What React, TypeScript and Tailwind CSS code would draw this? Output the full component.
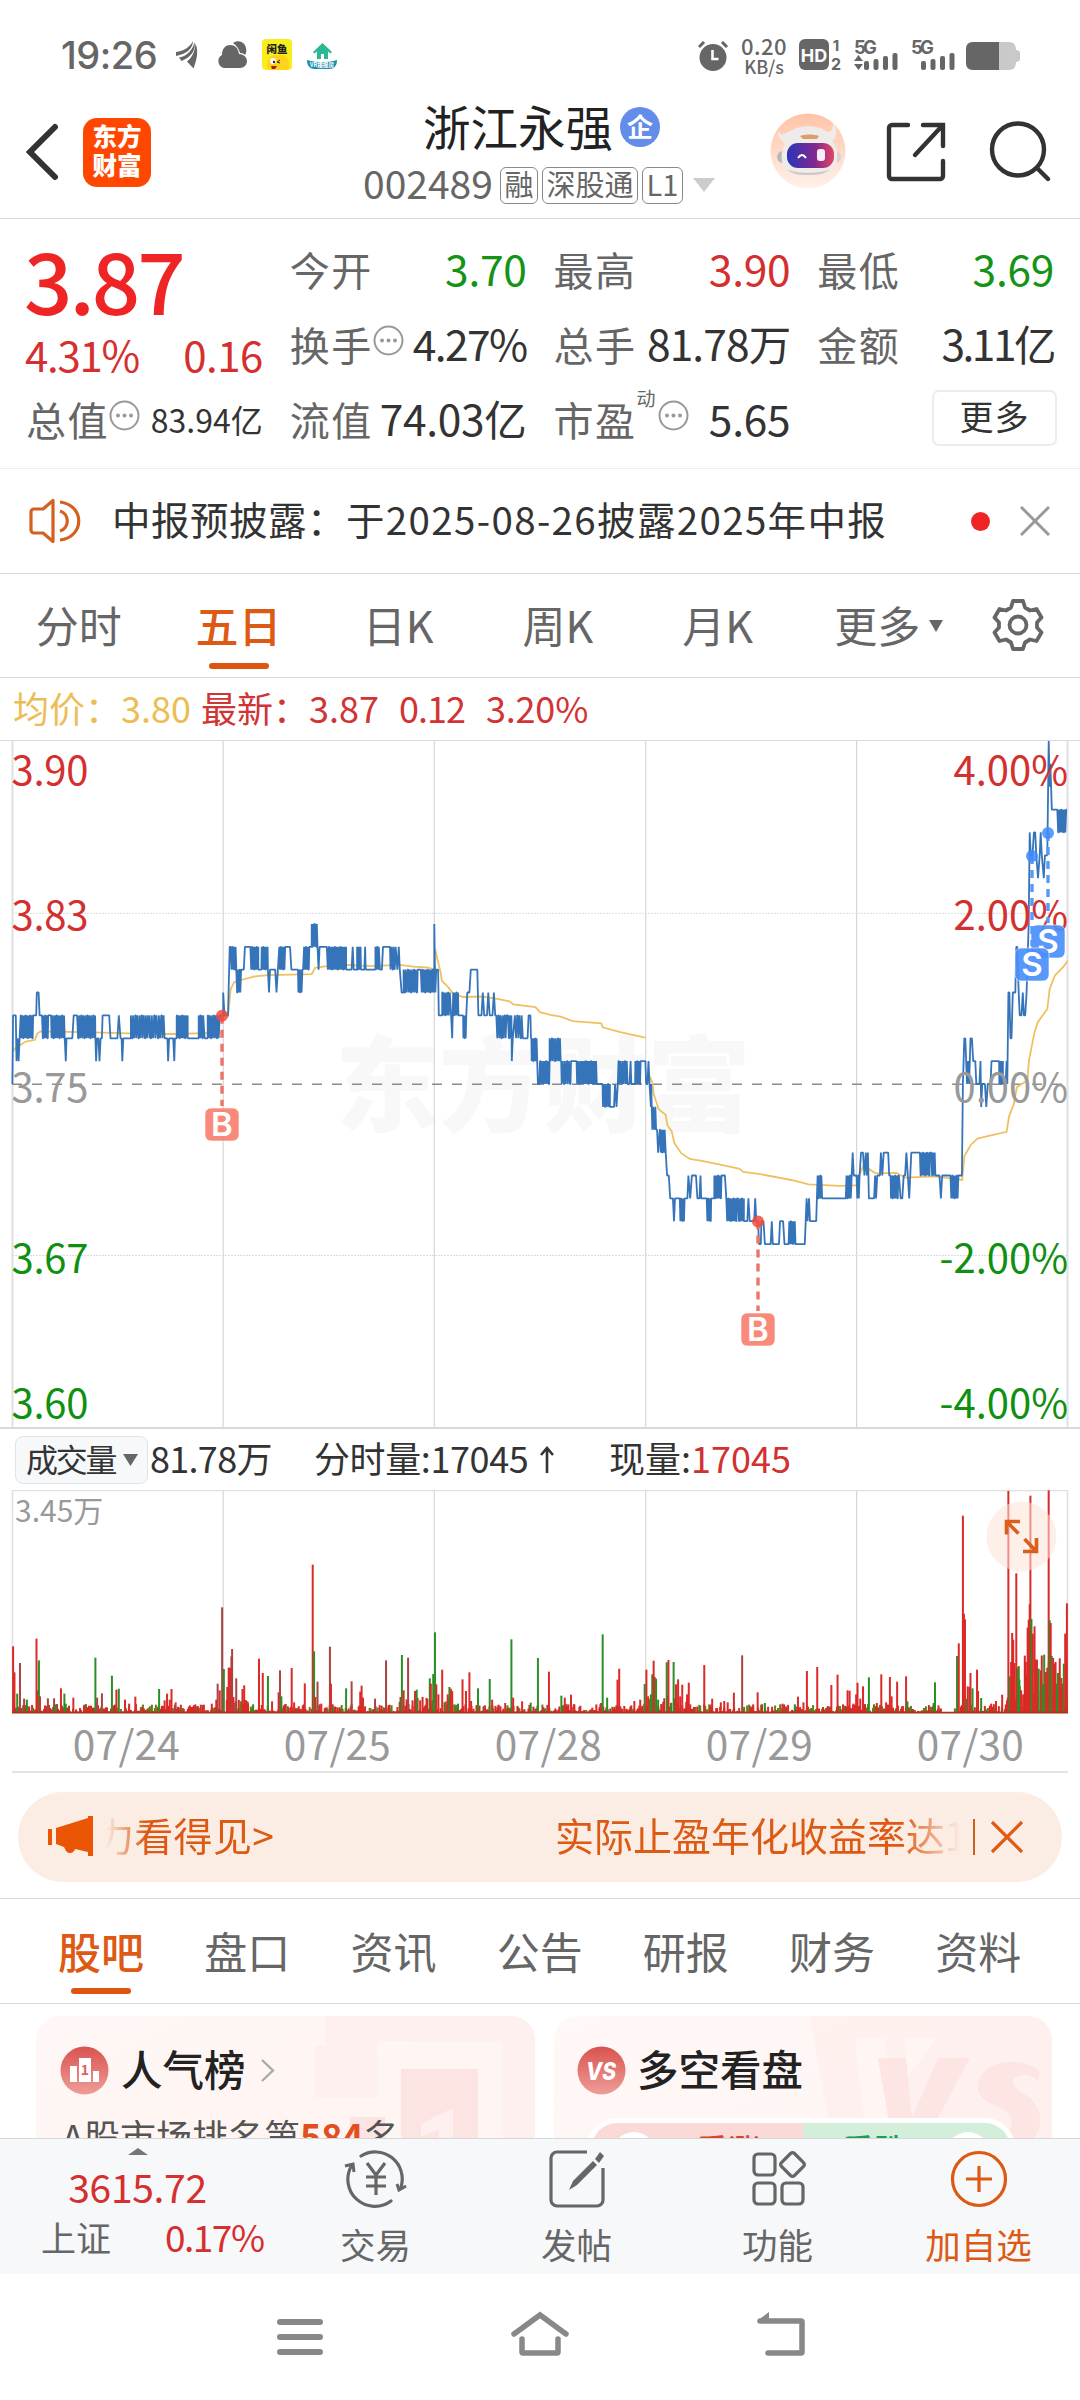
import type { ReactNode } from "react";

// Samples are stored in a 1568-unit-wide half-chart space, second half offset by 1568
const UNIT = 540 / 1568;
const HALF = 1568;
const TICK = 22.87; // height of one cent

// [x, level] is a point; [x0, x1, low, high, n] is a run of n swings between two levels
const LEFT: number[][] = [
  [36, 0], [38, 3], [46, 3], [48, 1], [51, 2], [54, 1], [57, 2], [60, 96, 2, 3, 16], [96, 3], [105, 3], [107, 4], [112, 4], [115, 3], [122, 3],
  [122, 140, 2, 3, 7], [141, 3], [147, 3], [147, 186, 2, 3, 13], [188, 2], [191, 1], [193, 2], [210, 2], [214, 3], [224, 3],
  [224, 276, 2, 3, 18], [277, 2], [279, 1], [282, 2], [286, 2], [289, 1], [292, 2], [296, 2], [298, 3], [317, 3], [321, 2], [341, 2],
  [345, 3], [350, 2], [353, 2], [355, 1], [358, 2], [380, 2], [380, 430, 2, 3, 16], [430, 3], [434, 2], [434, 475, 2, 3, 12], [478, 2],
  [486, 2], [488, 1], [491, 2], [503, 2], [506, 1], [508, 2], [513, 2], [513, 545, 2, 3, 12], [545, 2], [577, 2], [577, 590, 2, 3, 6],
  [590, 3], [594, 2], [603, 2], [603, 638, 2, 3, 11], [639, 3], [648, 3],
  [648, 4], [652, 3], [662, 3], [667, 6], [670, 684, 5, 6, 5], [686, 700, 4, 5, 6], [703, 5], [708, 5], [711, 6], [727, 6],
  [727, 750, 5, 6, 9], [750, 5], [759, 5], [760, 777, 5, 6, 7], [778, 5], [781, 4], [784, 5], [799, 5], [803, 4], [807, 5],
  [811, 828, 5, 6, 7], [828, 6], [842, 6], [846, 5], [863, 5], [864, 878, 4, 5, 6], [880, 5], [883, 898, 5, 6, 6], [898, 6], [905, 6],
  [905, 920, 6, 7, 7], [922, 6], [925, 5], [928, 6], [948, 6], [949, 1005, 5, 6, 20], [1005, 5], [1021, 5], [1024, 6], [1027, 5],
  [1037, 5], [1037, 1047, 5, 6, 4], [1048, 5], [1058, 5], [1060, 6], [1062, 5], [1090, 5], [1090, 1100, 5, 6, 4], [1103, 5], [1109, 5], [1112, 6],
  [1130, 6], [1131, 1149, 5, 6, 6], [1154, 5], [1158, 6], [1161, 5], [1166, 4], [1172, 4], [1172, 1213, 4, 5, 14], [1217, 5], [1222, 1261, 4, 5, 15],
  [1261, 7], [1264, 4], [1267, 5], [1272, 5], [1274, 3], [1284, 3], [1284, 1306, 3, 4, 8], [1310, 3], [1313, 2], [1316, 1330, 3, 4, 6],
  [1331, 3], [1344, 3], [1344, 1354, 2, 3, 5], [1357, 4], [1363, 4], [1367, 5], [1386, 5], [1389, 3], [1398, 3], [1402, 4], [1406, 3],
  [1414, 3], [1418, 4], [1422, 3], [1430, 3], [1434, 4], [1438, 3], [1441, 1471, 2, 3, 10], [1475, 1485, 2, 3, 4], [1486, 1], [1489, 2],
  [1495, 1515, 2, 3, 5], [1518, 2], [1532, 2], [1535, 3], [1540, 3], [1542, 1558, 1, 2, 7], [1560, 1], [1562, 0], [1566, 0], [1568, 1],
];

const RIGHT: number[][] = [
  [0, 28, 0, 1, 9], [28, 58, 1, 2, 10], [60, 90, 0, 1, 10], [90, 1], [103, 1], [105, 122, 0, 1, 6], [122, 163, 0, 1, 15], [165, 0], [178, 0],
  [180, 203, -1, 0, 8], [203, -1], [215, -1], [218, 0], [222, -1], [226, 0], [228, 252, 0, 1, 8], [254, 0], [260, 0], [263, 1], [265, 0],
  [276, 0], [277, 292, 0, 1, 5], [292, 1], [306, 1], [308, 0],
  [312, 0], [315, 1], [318, 0], [322, -1], [323, 0], [326, -2], [329, -1], [332, -2], [335, -1], [337, -2], [340, -2], [343, -3], [348, 362, -3, -2, 6], [365, -3],
  [369, -4], [374, -4], [378, -5], [386, -5], [389, -6], [392, -5], [404, -5], [406, 420, -6, -5, 7], [422, -5], [428, -5], [431, -4],
  [436, -5], [441, -4], [453, -4], [457, -5], [463, -5], [466, -4], [468, -5], [484, -5], [484, 497, -6, -5, 6], [497, -5], [506, -5],
  [506, 527, -5, -4, 8], [530, -4], [537, -4], [541, 572, -6, -5, 12], [575, 592, -6, -5, 6], [592, -6], [602, -6], [605, -5], [609, -6],
  [622, -6], [625, -5], [628, -6], [633, -6], [636, -7], [641, -7], [643, -6], [649, -6], [653, -7], [670, -7], [673, -6], [676, -7],
  [694, -7], [697, -6], [706, -6], [710, -7], [722, -7], [724, 740, -7, -6, 8], [742, -7], [769, -7], [774, -5], [777, -6], [781, -5],
  [784, -6], [802, -6], [806, -4], [806, 817, -5, -4, 5], [819, -5], [888, -5], [890, 905, -5, -4, 5], [908, -3], [911, -4], [915, -4],
  [919, 928, -5, -4, 4], [932, -3], [938, -3], [942, -4], [946, -3], [949, -4], [952, -3], [955, -5], [970, -5], [973, -4], [976, -5],
  [979, -4], [987, -4], [990, -3], [994, -4], [998, -3], [1011, -3], [1014, -4], [1017, 1040, -5, -4, 10], [1042, -4], [1047, -5],
  [1052, -5], [1056, -4], [1060, -4], [1064, -3], [1068, -4], [1072, -5], [1078, -3], [1101, -3], [1103, 1132, -4, -3, 13],
  [1136, 1146, -4, -3, 4], [1148, -4], [1160, -4], [1164, -5], [1168, -4], [1190, -4], [1192, 1215, -5, -4, 10], [1217, -4], [1225, -4],
  [1228, 0], [1232, 2], [1235, 2], [1240, 0], [1243, 1], [1246, 0], [1250, 2], [1254, 2], [1258, 1], [1264, 1], [1267, 0], [1276, 0], [1279, 1],
  [1281, -1], [1284, 0], [1292, 0], [1296, -1], [1300, 0], [1308, 0], [1311, 1], [1330, 1], [1332, 1344, 0, 1, 6], [1344, 0], [1352, 0],
  [1355, 1], [1357, 0], [1360, 4], [1363, 4], [1366, 2], [1369, 2], [1373, 4], [1380, 4], [1383, 6], [1386, 6], [1390, 4], [1393, 3],
  [1398, 3], [1402, 4], [1405, 3], [1409, 3], [1413, 4], [1419, 7], [1422, 11], [1425, 10], [1430, 10], [1434, 11], [1438, 11], [1441, 10],
  [1446, 9], [1451, 10], [1454, 11], [1457, 10], [1463, 9], [1466, 10], [1473, 10], [1477, 15], [1480, 13], [1482, 14], [1486, 12],
  [1502, 12], [1502, 1528, 11, 12, 10], [1530, 12],
];

const AVERAGES = [
  "38,720 45,712 60,705 75,698 102,694 108,680 118,675 200,676 300,678 400,680 500,681 600,679 640,678",
  "648,625 662,640 670,580 680,565 700,560 740,552 780,549 905,547 915,533 960,528 1010,526 1080,529 1160,526 1200,530 1240,532 1261,536",
  "1263,490 1272,520 1280,545 1283,562 1300,575 1315,590 1345,598 1400,597 1440,602 1480,608 1490,615 1555,621 1568,632 1598,638 1628,642 1663,652 1746,657 1750,666 1798,676 1874,689",
  "1876,778 1886,775 1894,790 1898,815 1913,850 1933,862 1938,885 1951,900 1958,925 1978,948 2003,961 2038,965 2098,975 2148,983 2158,990 2208,995 2298,1008 2348,1018 2438,1021 2486,1020",
  "2488,1010 2508,975 2526,985 2543,993 2603,992 2628,1003 2715,1000 2794,1008 2800,955 2818,930 2838,915 2868,910 2923,900 2930,865 2943,840 2953,800 2983,785 2988,740 3003,680 3013,655 3041,625 3048,580 3063,550 3088,530 3100,517",
];

// x,top and a colour flag: g = falling minute, d = shaded
const VOL_LEFT =
  "38,678 42,756 58,728d 50,820g 70,835d 78,838g 106,655 109,810 113,720g 116,828 139,834d 157,834d 162,852g 177,804 187,820g 191,850g 213,832 245,853 277,712g 282,832d 296,819d 325,766g 338,808 345,805g 363,838 375,850 393,829 412,860 462,806g 478,840 485,820 493,838 498,806 510,846d 550,860 567,852 590,854 615,850 628,838 632,790d 638,810 645,561d 650,746g 660,800 664,742 668,742 672,708 674,686d 678,830 686,774d 704,806 709,795 714,840 720,850 735,852g 752,715 763,758 778,767g 790,843 809,816 813,750d 817,828g 847,743 854,846 880,855 885,789 908,433 912,693g 916,830 922,784d 933,850 945,862 958,679d 961,790 966,862g 1005,804g 1021,783d 1046,814 1050,796 1054,832 1060,858 1089,835d 1121,720d 1154,860 1163,830 1167,704g 1172,810 1177,856 1185,712d 1198,840 1205,812 1210,808g 1220,840 1233,858 1241,836 1248,774g 1251,790 1258,761g 1263,636g 1267,792 1273,822 1284,748 1300,822 1305,800g 1309,805 1313,812 1330,850g 1343,777 1353,812 1363,756 1368,842 1388,804g 1408,855 1422,776g 1429,838 1448,855 1467,848 1485,657g 1490,832 1516,843 1541,847g 1562,713g";
const VOL_RIGHT =
  "26,754 62,826g 72,832 90,823 98,852 152,862 177,848 182,642g 195,832g 225,778 230,745 238,865 274,842 291,838 304,791g 309,748 314,828 322,822g 326,762g 330,721 333,770 337,775g 343,838g 358,858 368,726g 373,719 380,850g 388,725g 395,792 401,777 407,828 413,793 427,822 432,787 447,860 477,734 500,835 525,846 535,842 545,846 563,817 587,705d 619,852 632,816 653,848g 704,850 740,852g 749,829 765,846 775,752 805,740 835,858 846,794 864,763 893,810 899,811 910,850 918,822 922,787 930,835 938,798 955,771g 978,848 991,762 1005,846 1016,770 1021,828 1037,784 1051,860 1063,768 1067,843g 1143,848g 1147,786g 1157,855 1211,707g 1216,669 1228,286 1231,580 1234,597 1238,835g 1242,798 1247,800 1250,758 1256,804g 1269,748 1272,812 1281,833g 1310,850 1324,842 1342,823 1356,840 1360,212 1364,768g 1368,725 1371,638 1374,658 1378,728 1383,459 1388,741g 1392,778g 1397,810 1403,822 1411,786 1416,622 1419,598 1422,552 1424,226 1427,596g 1431,640 1436,618 1440,718 1443,718 1448,745g 1454,750 1459,792g 1464,703g 1469,755 1473,742 1477,210 1480,600g 1483,608 1486,707g 1490,713 1494,730 1497,725 1501,790g 1504,758g 1508,790 1511,800 1514,773 1518,790 1521,730g 1525,640 1530,549";

function pricePath() {
  const out: string[] = [];
  const push = (x: number, v: number) => out.push(`${(x * UNIT).toFixed(1)},${(343 - v * TICK).toFixed(1)}`);
  const run = (list: number[][], off: number) => {
    for (const s of list) {
      if (s.length === 2) {
        push(s[0] + off, s[1]);
        continue;
      }
      const [a, b, lo, hi] = s;
      const n = Math.max(2, Math.round(s[4] * 0.52));
      const step = (b - a) / (n * 2);
      // uneven swings, some hold their level for a moment
      for (let i = 0; i <= n * 2; i++) {
        const hold = (i * 7 + a) % 3 === 0 ? step * 0.5 : 0;
        push(a + off + i * step, i % 2 ? lo : hi);
        if (hold && i < n * 2) push(a + off + i * step + hold, i % 2 ? lo : hi);
      }
    }
  };
  run(LEFT, 0);
  run(RIGHT, HALF);
  return out.join(" ");
}

function avgPath(src: string) {
  return src
    .split(" ")
    .map((p) => {
      const [x, y] = p.split(",").map(Number);
      return `${(x * UNIT).toFixed(1)},${((y - 793) * 0.4464 + 343).toFixed(1)}`;
    })
    .join(" ");
}

type Bar = { x: number; h: number; c: string };

function volumeBars(): Bar[] {
  const bars: Bar[] = [];
  let seed = 7;
  const rnd = () => {
    seed = (seed * 16807) % 2147483647;
    return seed / 2147483647;
  };
  for (let x = 38; x < 3100; x += 2.9) {
    const r = rnd();
    const busy = x > 2925 ? 60 : (x > 650 && x < 730) || (x > 1160 && x < 1320) || (x > 1870 && x < 2000) ? 16 : 8;
    const quiet = x > 2735 && x < 2770;
    bars.push({ x: x * UNIT, h: quiet ? 1 : 1 + r * r * busy, c: rnd() > 0.72 ? "#5f7d18" : "#d32a26" });
  }
  const add = (src: string, off: number) => {
    for (const p of src.split(" ")) {
      const [x, y] = p.split(",");
      const c = y.endsWith("g") ? "#2a8f25" : y.endsWith("d") ? "#a84444" : "#db2a28";
      bars.push({ x: (Number(x) + off) * UNIT, h: Math.min(223, (878 - parseInt(y)) / 3), c });
    }
  };
  add(VOL_LEFT, 0);
  add(VOL_RIGHT, HALF);
  return bars;
}

const GRID_X = [223.2, 434.3, 645.7, 856.6];

const AXIS = [
  { y: 43.5, price: "3.90", pct: "4.00%", fill: "#d33030" },
  { y: 188.5, price: "3.83", pct: "2.00%", fill: "#d33030" },
  { y: 360.5, price: "3.75", pct: "0.00%", fill: "#999999" },
  { y: 531.5, price: "3.67", pct: "-2.00%", fill: "#0f9010" },
  { y: 676.5, price: "3.60", pct: "-4.00%", fill: "#0f9010" },
];

const MARKS = [
  { x: 222, dot: 274.7, box: 367, t: "B" },
  { x: 758, dot: 480.5, box: 572, t: "B" },
  { x: 1048, dot: 92, box: 184, t: "S" },
  { x: 1032, dot: 115, box: 207, t: "S" },
];

function PriceChart() {
  return (
    <svg width="1080" height="686" viewBox="0 0 1080 686" className="block">
      <text x="543" y="383" textAnchor="middle" fontSize="104" fontWeight="900" fill="#f8f8f8">东方财富</text>
      {GRID_X.map((x) => (
        <line key={x} x1={x} x2={x} y1="0" y2="686" stroke="#d6d6d6" strokeWidth="1.2" />
      ))}
      <path d="M12.5 0V686M1067.5 0V686" stroke="#e0e0e0" strokeWidth="2" />
      <path d="M12 172.3H1068M12 514.5H1068" stroke="#dcdcdc" strokeWidth="1" strokeDasharray="2 1" />
      <path d="M12 343.3H1068" stroke="#8c8c8c" strokeWidth="1.6" strokeDasharray="10 10" />
      {AVERAGES.map((a) => (
        <polyline key={a.slice(0, 8)} points={avgPath(a)} fill="none" stroke="#efc062" strokeWidth="1.8" />
      ))}
      <polyline points={pricePath()} fill="none" stroke="#3674ba" strokeWidth="1.8" strokeLinejoin="bevel" />
      {AXIS.map((a) => (
        <g key={a.price} fill={a.fill} fontSize="40">
          <text x="11.5" y={a.y} textLength="77">{a.price}</text>
          <text x="1068" y={a.y} textAnchor="end">{a.pct}</text>
        </g>
      ))}
      {MARKS.map((m) => {
        const buy = m.t === "B";
        return (
          <g key={m.x}>
            <line x1={m.x} x2={m.x} y1={m.dot} y2={m.box - 2} stroke={buy ? "#ec7468" : "#5a98f5"} strokeWidth="3.4" strokeDasharray="8 6" />
            <circle cx={m.x} cy={m.dot} r="6" fill={buy ? "#f04a3e" : "#3f8bfa"} opacity="0.85" />
            <rect x={m.x - 17} y={m.box} width="34" height="33" rx="6" fill={buy ? "#f97f6f" : "#4a90fa"} stroke="#fff" strokeOpacity="0.6" strokeWidth="1" opacity="0.92" />
            <text x={m.x} y={m.box + 28} textAnchor="middle" fontSize="33" fontWeight="600" fill="#fff" fontFamily="Inter">{m.t}</text>
          </g>
        );
      })}
    </svg>
  );
}

function VolumeChart() {
  return (
    <svg width="1080" height="224" viewBox="0 0 1080 224" className="block">
      {GRID_X.map((x) => (
        <line key={x} x1={x} x2={x} y1="0" y2="223" stroke="#d6d6d6" strokeWidth="1.2" />
      ))}
      <path d="M12.5 0V223M1067.5 0V223M12 .5H1068" stroke="#e0e0e0" strokeWidth="1.6" fill="none" />
      {volumeBars().map((b, i) => (
        <rect key={i} x={b.x - 1} y={223 - b.h} width="2" height={b.h} fill={b.c} />
      ))}
      <path d="M12 222.6H1068" stroke="#a83218" strokeWidth="1.6" />
      <circle cx="1021.5" cy="46.5" r="35" fill="#fde3d6" opacity="0.55" />
      <g stroke="#d8601c" strokeWidth="3.6" fill="none">
        <path d="M1006.500 44.500V31.500H1020M1007 32l11.500 11.500" />
        <path d="M1036.500 48V61.500H1023M1036 61l-11.500-12" />
      </g>
      <text x="15" y="32" fontSize="30" fill="#999">3.45万</text>
    </svg>
  );
}

function StatusBar() {
  return (
    <div className="flex h-[108px] items-start pt-[34px] pr-[60px] pl-[61px] text-[#666]">
      <span className="w-[98px] font-[Inter] text-[38px] leading-[42px] font-medium tracking-[-0.5px]">19:26</span>
      <svg width="24" height="30" viewBox="0 0 24 30" className="mt-[6px] ml-[17px]" fill="#666">
        <path d="M0 12C8 11 14 7 17 1c0 7-6 13-17 15zM3 17.500C12 16 17 9 18.500 2c1.500 8-3 15-13 19zM11 21.500c5-4 8-10 8.500-18 3.500 8 1 17-2 25z" />
      </svg>
      <svg width="30" height="29" viewBox="0 0 30 29" className="mt-[6px] ml-[17px]" fill="#666">
        <path d="M16 3c7-5 15 1 13 10l-1 2c-2-2-4-2-5-2-1-4-3-7-7-10z" />
        <path d="M7 28a7 7 0 0 1-2-13C5 8 9 5 13 5c5 0 8 3 9 9 4 0 8 3 8 7s-3 7-7 7z" />
      </svg>
      <svg width="31" height="32" viewBox="0 0 31 32" className="mt-[5px] ml-[15px]">
        <rect width="30" height="31" rx="4" fill="#f7ee1c" />
        <text x="15" y="13.500" fontSize="10.500" fontWeight="900" textAnchor="middle" fill="#222">闲鱼</text>
        <path d="M5 28c-1-7 3-12 9-12h8c4 2 6 7 5 13l-2 2H8z" fill="#ffd31a" />
        <circle cx="11" cy="22" r="3" fill="#fff" />
        <circle cx="12" cy="23" r="1.200" fill="#222" />
        <path d="M18 21l-3 2 3 1" stroke="#222" fill="none" />
        <path d="M9 27h6l-2 3h-3z" fill="#a3201a" />
      </svg>
      <svg width="31" height="30" viewBox="0 0 31 30" className="mt-[8px] ml-[14px]">
        <path d="M15.500 1L6 10l1.500 1.500L10 9.500V17h4v-5h3v5h4V9.500l2.500 2L25 10z" fill="#2cb893" />
        <path d="M0 18c10 3 20 3 30 0 0 6-3 9-8 9H8c-5 0-8-3-8-9z" fill="#1b8fae" />
        <text x="15" y="25" fontSize="6" fontWeight="700" textAnchor="middle" fill="#fff" textLength="24" lengthAdjust="spacingAndGlyphs">VR播报房</text>
      </svg>

      <svg width="30" height="30" viewBox="0 0 30 30" className="mt-[7px] ml-auto" fill="#666">
        <circle cx="15" cy="16.500" r="13.500" />
        <path d="M1 6l5-5M24 1l5 5" stroke="#666" strokeWidth="3" />
        <path d="M14.500 9v9h6" stroke="#fff" strokeWidth="2.600" fill="none" />
      </svg>
      <div className="ml-[11px] flex w-[50px] flex-col items-center font-medium">
        <span className="text-[22px] leading-[23px] tracking-[0.500px]">0.20</span>
        <span className="text-[18px] leading-[18px]">KB/s</span>
      </div>
      <svg width="44" height="32" viewBox="0 0 44 32" className="mt-[5px] ml-[10px]">
        <rect width="30" height="31" rx="6" fill="#666" />
        <text x="15" y="22.500" fontSize="18" fontWeight="700" textAnchor="middle" fill="#fff" fontFamily="Inter">HD</text>
        <text x="37" y="12" fontSize="15" fontWeight="700" textAnchor="middle" fill="#666" fontFamily="Inter">1</text>
        <text x="37" y="30.500" fontSize="16" fontWeight="700" textAnchor="middle" fill="#666" fontFamily="Inter">2</text>
      </svg>
      <Signal arrows />
      <Signal />
      <svg width="54" height="28" viewBox="0 0 54 28" className="mt-[8px] ml-[9px]">
        <path d="M33 0h10c5 0 7 3 7 8 2 0 4 1 4 3v6c0 2-2 3-4 3 0 5-2 8-7 8H33z" fill="#c9c9c9" />
        <path d="M7 0h26v28H7c-5 0-7-3-7-7V7c0-4 2-7 7-7z" fill="#666" />
      </svg>
    </div>
  );
}

function Signal({ arrows }: { arrows?: boolean }) {
  return (
    <svg width="46" height="32" viewBox="0 0 46 32" className="mt-[5px] ml-[11px]" fill="#666">
      <text x="0" y="14.500" fontSize="18.500" fontWeight="700" fontFamily="Inter" textLength="23">5G</text>
      {arrows && <path d="M0 22l4.500-6 4.500 6zM0 25h9l-4.500 6z" />}
      <rect x="10" y="22" width="5" height="9" rx="2" />
      <rect x="19.500" y="20" width="5" height="11" rx="2" />
      <rect x="29" y="17" width="5" height="14" rx="2" />
      <rect x="38.500" y="14" width="5" height="17" rx="2" />
    </svg>
  );
}

function Tag({ children }: { children: ReactNode }) {
  return (
    <span className="flex h-[37px] shrink-0 items-center rounded-[6px] border border-[#8a8a8a] px-[3.500px] pb-[3px] text-[29px] leading-none whitespace-nowrap">
      {children}
    </span>
  );
}

function Header() {
  return (
    <header className="flex h-[111px] items-start border-b border-[#d9d9d9] pl-[26px]">
      <svg width="34" height="58" viewBox="0 0 34 58" className="mt-[15px]">
        <path d="M29 4L4 29l25 25" fill="none" stroke="#333" strokeWidth="6" strokeLinecap="round" />
      </svg>
      <div className="mt-[10px] ml-[23px] flex h-[69px] w-[68px] flex-col items-center justify-center rounded-[14px] bg-[#ff4700] text-[24.500px] leading-[29px] font-black text-white">
        <span className="-mt-[5px]">东方</span>
        <span>财富</span>
      </div>
      <div className="ml-[212px] flex w-[354px] flex-col">
        <div className="flex h-[54px] items-start pl-[60px]">
          <span className="-mt-[6px] text-[47.500px] leading-[47px] text-[#222]">浙江永强</span>
          <span className="-mt-px ml-[7px] flex h-[40px] w-[40px] items-center justify-center rounded-full bg-[#638de8] pb-[3px] text-[26px] leading-none font-bold text-white">
            企
          </span>
        </div>
        <div className="flex items-center text-[#666]">
          <span className="-mt-[2px] w-[137px] shrink-0 text-[39px] leading-[44px]">002489</span>
          <div className="mt-[4px] flex shrink-0 items-center gap-[4px]">
            <Tag>融</Tag>
            <Tag>深股通</Tag>
            <Tag>L1</Tag>
          </div>
          <svg width="22" height="14" viewBox="0 0 22 14" className="mt-[4px] ml-[10px] shrink-0">
            <path d="M0 0h22L11 14z" fill="#ccc" />
          </svg>
        </div>
      </div>
      <svg width="76" height="78" viewBox="0 0 76 78" className="mt-[4px] ml-[53px]">
        <defs>
          <linearGradient id="halo" x1="0" y1="0" x2="0" y2="1">
            <stop offset="0" stopColor="#ffc3a6" />
            <stop offset="1" stopColor="#fff1ea" />
          </linearGradient>
          <linearGradient id="visor" x1="0" y1="0" x2="1" y2="0">
            <stop offset="0" stopColor="#2a35b8" />
            <stop offset="0.6" stopColor="#83288f" />
            <stop offset="1" stopColor="#e04663" />
          </linearGradient>
        </defs>
        <circle cx="38" cy="39" r="37.500" fill="url(#halo)" />
        <circle cx="13" cy="45" r="6" fill="#bdb7b9" />
        <circle cx="65" cy="45" r="6" fill="#d8d2d2" />
        <path d="M8 19c2 6 8 3 14-1 9-5 24-5 32 0 6 4 9 1 9-7 6 7 3 15-1 18 5 6 6 13 5 20-2 11-12 14-29 14S14 60 12 50c-1-7 0-12 3-19-4-2-7-6-7-12z" fill="#efebea" />
        <path d="M17 57c6 5 36 5 43 0-4 5-12 6-22 6s-17-1-21-6z" fill="#cfc8c8" />
        <rect x="17" y="31" width="47" height="25" rx="11" fill="url(#visor)" />
        <path d="M30 24c5-2 14-2 19 0l-2 3H33z" fill="#dba067" />
        <path d="M28 46q4-6 8 0" fill="none" stroke="#fff" strokeWidth="2" />
        <rect x="47" y="37" width="8" height="12" rx="3" fill="#f5eef7" />
      </svg>
      <svg width="60" height="60" viewBox="0 0 60 60" className="mt-[14px] ml-[40px]" fill="none" stroke="#333" strokeWidth="4.400" strokeLinecap="round">
        <path d="M22 3H6a3 3 0 0 0-3 3v48a3 3 0 0 0 3 3h48a3 3 0 0 0 3-3V39M37 3h20v21M56 4L29 33" />
      </svg>
      <svg width="62" height="64" viewBox="0 0 62 64" className="mt-[13px] ml-[43px]" fill="none" stroke="#333" strokeWidth="4.400" strokeLinecap="round">
        <circle cx="29" cy="28.500" r="26" />
        <path d="M49 48l10 10" />
      </svg>
    </header>
  );
}

function Dots({ className = "" }: { className?: string }) {
  return (
    <svg width="31" height="31" viewBox="0 0 31 31" className={className}>
      <circle cx="15.500" cy="15.500" r="14" fill="none" stroke="#999" strokeWidth="2" />
      <g fill="#999">
        <circle cx="9" cy="15.500" r="2" />
        <circle cx="15.500" cy="15.500" r="2" />
        <circle cx="22" cy="15.500" r="2" />
      </g>
    </svg>
  );
}

type StatProps = { label: string; value: string; color?: string; spacing?: string; extra?: ReactNode };

function Stat({ label, value, color = "text-[#333]", spacing = "tracking-[-0.300px]", extra }: StatProps) {
  return (
    <div className="flex h-[75px] items-center justify-between whitespace-nowrap">
      <div className="flex items-center">
        <span className="text-[40px] tracking-[1.500px] text-[#666]">{label}</span>
        {extra}
      </div>
      <span className={`text-[42.500px] ${spacing} ${color}`}>{value}</span>
    </div>
  );
}

function Quote() {
  return (
    <section className="grid h-[250px] grid-cols-4 gap-x-[27px] border-b border-[#eee] px-[26px] pt-[12px] leading-none">
      <div className="flex flex-col">
        <div className="-ml-[2px] h-[90px] text-[85px] leading-[93px] font-medium tracking-[-3px] text-[#ee2524]">3.87</div>
        <div className="-ml-px flex h-[60px] items-center justify-between pt-[6px] text-[42px] text-[#d62f2f]">
          <span className="tracking-[-1.300px]">4.31%</span>
          <span className="tracking-[-0.500px]">0.16</span>
        </div>
        <div className="flex h-[75px] items-center whitespace-nowrap">
          <span className="text-[40px] tracking-[1.500px] text-[#666]">总值</span>
          <Dots className="-mt-[6px]" />
          <span className="ml-auto text-[32px] text-[#333]">83.94亿</span>
        </div>
      </div>
      <div>
        <Stat label="今开" value="3.70" color="text-[#149414]" />
        <Stat label="换手" value="4.27%" spacing="tracking-[-1.600px]" extra={<Dots className="-mt-[6px]" />} />
        <Stat label="流值" value="74.03亿" />
      </div>
      <div>
        <Stat label="最高" value="3.90" color="text-[#d32f2f]" />
        <Stat label="总手" value="81.78万" spacing="tracking-[-0.900px]" />
        <Stat
          label="市盈"
          value="5.65"
          extra={
            <>
              <span className="-mt-[42px] text-[19px] text-[#666]">动</span>
              <Dots className="-mt-[6px] ml-[2px]" />
            </>
          }
        />
      </div>
      <div>
        <Stat label="最低" value="3.69" color="text-[#149414]" />
        <Stat label="金额" value="3.11亿" spacing="tracking-[-2.500px]" />
        <div className="mt-[9px] -mr-[3px] ml-auto flex h-[56px] w-[125px] items-center justify-center rounded-[7px] border-2 border-[#ececec] pb-[4px] text-[34px] tracking-[1px] text-[#333]">
          更多
        </div>
      </div>
    </section>
  );
}

function Notice() {
  return (
    <section className="flex h-[105px] items-center border-b border-[#d9d9d9] pl-[29px]">
      <svg width="52" height="46" viewBox="0 0 52 46" fill="none" stroke="#d4601f" strokeWidth="3.200">
        <path d="M24 2.500v41L14 35H5a3 3 0 0 1-3-3V14a3 3 0 0 1 3-3h9z" strokeLinejoin="round" />
        <path d="M31 13a10.500 10.500 0 0 1 0 20M31 4c25 3 25 35 0 38" />
      </svg>
      <span className="-mt-[5px] ml-[31px] text-[38.500px] leading-none text-[#333]">
        <span className="tracking-[0.500px]">中报预披露：</span>
        <span className="tracking-[1.350px]">于2025-08-26披露2025年中报</span>
      </span>
      <span className="mr-[30px] ml-auto h-[19px] w-[19px] rounded-full bg-[#f02424]" />
      <svg width="30" height="30" viewBox="0 0 30 30" className="mr-[30px]">
        <path d="M1 1l28 28M29 1L1 29" stroke="#999" strokeWidth="3" />
      </svg>
    </section>
  );
}

const PERIODS = ["分时", "五日", "日K", "周K", "月K", "更多"];

function PeriodTabs() {
  return (
    <nav className="flex h-[104px] border-b border-[#d9d9d9] text-[43px] leading-none text-[#666]">
      {PERIODS.map((p) => (
        <div key={p} className={`relative flex w-[159.700px] flex-col items-center pt-[29px] pr-[2px] ${p === "五日" ? "font-medium text-[#dd5a14]" : ""}`}>
          {p}
          {p === "五日" && <span className="mt-[17px] h-[6px] w-[60px] rounded-full bg-[#dd5510]" />}
          {p === "更多" && (
            <svg width="14" height="12" viewBox="0 0 14 12" className="absolute top-[46px] left-[131px]">
              <path d="M0 0h14L7 12z" fill="#666" />
            </svg>
          )}
        </div>
      ))}
      <svg width="52" height="52" viewBox="0 0 52 52" className="mt-[25px] ml-[34px]" fill="none" stroke="#666" strokeWidth="3.800" strokeLinejoin="round">
        <path d="M21 2h10l2 6.500 5 3 6.500-1.500 5 8.500-4.500 5v5l4.500 5-5 8.500-6.500-1.500-5 3-2 6.500H21l-2-6.500-5-3-6.500 1.500-5-8.500 4.500-5v-5l-4.500-5 5-8.500 6.500 1.500 5-3z" />
        <circle cx="26" cy="26" r="8.500" />
      </svg>
    </nav>
  );
}

function Legend() {
  return (
    <div className="flex h-[63px] items-center border-b border-[#dadada] pb-[4px] pl-[13px] text-[36px] leading-none text-[#d03434]">
      <span className="w-[188px] text-[#ecbd54]">均价：3.80</span>
      <span className="w-[198px]">最新：3.87</span>
      <span className="w-[87px] tracking-[-1px]">0.12</span>
      <span className="tracking-[-0.200px]">3.20%</span>
    </div>
  );
}

function VolumeHeader() {
  return (
    <div className="flex h-[63px] items-center border-t-2 border-[#d9d9d9] pl-[15px] text-[36px] leading-none text-[#333]">
      <div className="flex h-[48px] w-[133px] items-center rounded-[8px] border border-[#e0e3e7] bg-[#f6f8fa] pl-[10px]">
        <span className="-mt-[4px] text-[32px] tracking-[-2.300px]">成交量</span>
        <svg width="15" height="12" viewBox="0 0 15 12" className="ml-[8px]">
          <path d="M0 0h15L7.500 12z" fill="#666" />
        </svg>
      </div>
      <span className="-mt-[5px] ml-[2px] w-[164px] tracking-[-0.700px]">81.78万</span>
      <span className="-mt-[5px] flex w-[295px] items-center tracking-[-0.400px]">
        分时量:17045
        <svg width="14" height="28" viewBox="0 0 14 28" className="mt-[5px] ml-[12px]" fill="none" stroke="#333" strokeWidth="2.600">
          <path d="M7 27V2M1 9l6-7 6 7" />
        </svg>
      </span>
      <span className="-mt-[5px]">
        现量:<span className="text-[#d33030]">17045</span>
      </span>
    </div>
  );
}

function Promo() {
  return (
    <div className="mx-[18px] mt-[19px] flex h-[90px] items-center rounded-full bg-[#fcede4] text-[#dd5a14]">
      <svg width="46" height="42" viewBox="0 0 46 42" className="ml-[30px]" fill="#ea5504">
        <path d="M0 13h4v16H0zM8 12L40 2V0h5v40h-5v-4l-13-3c-1 5-7 5-9 2l-2-4-8-3z" />
      </svg>
      <div className="ml-[8px] flex h-[60px] w-[860px] items-center overflow-hidden text-[39px] leading-none whitespace-nowrap [mask-image:linear-gradient(to_right,transparent_4px,#000_44px,#000_800px,transparent_858px)]">
        <span className="-mt-[5px] -ml-[7px] w-[460px] shrink-0 tracking-[0.300px]">力看得见&gt;</span>
        <span className="-mt-[5px] shrink-0">实际止盈年化收益率达1</span>
      </div>
      <span className="ml-[11px] h-[36px] w-[2px] bg-[#c9601f]" />
      <svg width="34" height="34" viewBox="0 0 34 34" className="ml-[15px]">
        <path d="M2 2l30 30M32 2L2 32" stroke="#e05a14" strokeWidth="3.200" />
      </svg>
    </div>
  );
}

const SECTIONS = ["股吧", "盘口", "资讯", "公告", "研报", "财务", "资料"];

function SectionTabs() {
  return (
    <nav className="mt-[16px] flex h-[106px] border-y border-[#d9d9d9] pl-[28px] text-[43px] leading-none text-[#666]">
      {SECTIONS.map((s, i) => (
        <div key={s} className={`flex w-[146.200px] flex-col items-center pt-[30px] ${i === 0 ? "font-medium text-[#dd5a14]" : ""}`}>
          {s}
          {i === 0 && <span className="mt-[16px] h-[6px] w-[60px] rounded-full bg-[#dd5510]" />}
        </div>
      ))}
    </nav>
  );
}

function Cards() {
  return (
    <section className="flex h-[134px] gap-[19px] overflow-hidden pt-[12px] pl-[36px]">
      <div className="relative h-[240px] w-[499px] shrink-0 overflow-hidden rounded-[24px] bg-gradient-to-br from-[#fff7f5] to-[#fef4f2] pl-[24px]">
        <svg width="260" height="124" viewBox="0 0 260 124" className="absolute top-0 right-0">
          <path d="M50 0h210v124H228V25H102v57H40V30h10z" fill="#fdeeeb" opacity=".7" />
          <path d="M126 53h77v71h-77zM75 101h35v23H75z" fill="#fbe4e1" />
          <path d="M146 108l32-16v32h-14v-10l-18 6z" fill="#fdf0ee" />
        </svg>
        <div className="relative mt-[30px] flex items-center">
          <svg width="49" height="49" viewBox="0 0 49 49">
            <circle cx="24.500" cy="24.500" r="24" fill="url(#ball)" />
            <defs>
              <linearGradient id="ball" x1="0" y1="0" x2="0" y2="1">
                <stop offset="0" stopColor="#d9534f" />
                <stop offset="1" stopColor="#ee9d98" />
              </linearGradient>
            </defs>
            <path d="M10 20h7v16h-7zM19 12h12v24H19zM33 25h6v11h-6z" fill="#fff" />
            <text x="25" y="29" fontSize="14" fontWeight="700" textAnchor="middle" fill="#d9635f">1</text>
          </svg>
          <span className="-mt-[4px] ml-[12px] text-[41.500px] leading-none font-medium text-[#222]">人气榜</span>
          <svg width="16" height="25" viewBox="0 0 16 25" className="ml-[14px]">
            <path d="M2 2l11 10.500L2 23" fill="none" stroke="#aaa" strokeWidth="2.400" />
          </svg>
        </div>
        <div className="relative mt-[18px] ml-[2px] text-[36px] leading-[44px] text-[#555]">
          A股市场排名第<b className="font-bold text-[#e0501e]">584</b>名
        </div>
      </div>
      <div className="relative h-[240px] w-[498px] shrink-0 overflow-hidden rounded-[24px] bg-gradient-to-br from-[#fff8f6] to-[#fef4f2] pl-[23px]">
        <svg width="242" height="124" viewBox="0 0 242 124" className="absolute top-0 right-0">
          <path d="M0 0h242v124H22z" fill="#fdeeeb" opacity=".7" />
          <path d="M45 22h30l8 102H56zM95 22h32l-30 40z" fill="#fff6f4" />
          <path d="M68 42h28l6 60 26-60h32l-44 82H82z" fill="#fce5e2" />
          <path d="M230 56c-12-14-56-16-62 12-4 22 34 20 34 38 0 8-8 12-14 18h34c14-14 10-36-8-46-12-7-14-14-6-18 8-3 14 0 20 4z" fill="#fce5e2" />
        </svg>
        <div className="relative mt-[30px] flex items-center">
          <svg width="49" height="49" viewBox="0 0 49 49">
            <circle cx="24.500" cy="24.500" r="24" fill="url(#ball)" />
            <text x="24" y="34" fontSize="25" fontWeight="800" fontStyle="italic" textAnchor="middle" fill="#fff" fontFamily="Inter" textLength="30" lengthAdjust="spacingAndGlyphs">VS</text>
          </svg>
          <span className="-mt-[4px] ml-[11px] text-[41.500px] leading-none font-medium text-[#222]">多空看盘</span>
        </div>
        <div className="relative mt-[23px] ml-[10px] flex h-[60px] w-[428px] overflow-hidden rounded-[30px] border-[5px] border-white text-[32px] leading-none">
          <div className="flex w-[211px] items-start bg-[#fbd9d6] pt-[7px] pl-[20px]">
            <span className="mt-[2px] h-[44px] w-[44px] rounded-full bg-white" />
            <span className="mt-[2px] ml-[40px] font-medium text-[#d8452f]">看涨</span>
          </div>
          <div className="flex flex-1 items-start justify-end bg-[#d3efdc] pt-[7px] pr-[20px]">
            <span className="mt-[2px] mr-[40px] font-medium text-[#1d9e54]">看跌</span>
            <span className="mt-[2px] h-[44px] w-[44px] rounded-full bg-white" />
          </div>
        </div>
      </div>
    </section>
  );
}

function Action({ label, active, children }: { label: string; active?: boolean; children: ReactNode }) {
  return (
    <div className={`flex w-[201px] flex-col items-center pt-[9px] ${active ? "text-[#dd5a14]" : "text-[#666]"}`}>
      <svg width="64" height="60" viewBox="0 0 64 60" fill="none" stroke="currentColor" strokeWidth="3.200">
        {children}
      </svg>
      <span className="mt-[18px] text-[35.500px] leading-none">{label}</span>
    </div>
  );
}

function BottomBar() {
  return (
    <footer className="flex h-[136px] border-t border-[#d5d7d9] bg-[#f6f8fa]">
      <div className="flex w-[275px] flex-col">
        <svg width="20" height="7" viewBox="0 0 20 7" className="mt-[9px] ml-[128px]">
          <path d="M10 0l10 7H0z" fill="#777" />
        </svg>
        <span className="mt-[11px] w-[275px] text-center text-[39px] leading-[40px] tracking-[-0.300px] text-[#d62f2f]">3615.72</span>
        <div className="mt-[11px] flex items-center pl-[41px] leading-none">
          <span className="text-[35px] text-[#666]">上证</span>
          <span className="mt-px ml-[54px] text-[37px] tracking-[-1.500px] text-[#d62f2f]">0.17%</span>
        </div>
      </div>
      <Action label="交易">
        <path d="M17 8a27 27 0 0 1 40 31M47 53A27 27 0 0 1 8 17" strokeLinecap="round" />
        <path d="M1 18l8-2 1 8M62 38l-7 4-2-6" strokeWidth="3" />
        <path d="M23 15l9 12 9-12M32 27v20M22 29h20M22 38h20" />
      </Action>
      <Action label="发帖">
        <path d="M42 4H12a6 6 0 0 0-6 6v42a6 6 0 0 0 6 6h40a6 6 0 0 0 6-6V20" />
        <path d="M55 4l4 4-5 7-4-4zM48 13l4 4-20 20-8 5 4-9z" fill="currentColor" stroke="none" />
      </Action>
      <Action label="功能">
        <rect x="8" y="6" width="21" height="21" rx="4" />
        <rect x="8" y="35" width="21" height="21" rx="4" />
        <rect x="36" y="35" width="21" height="21" rx="4" />
        <path d="M44.500 5.500a3 3 0 0 1 4 0l9 9a3 3 0 0 1 0 4l-9 9a3 3 0 0 1-4 0l-9-9a3 3 0 0 1 0-4z" />
      </Action>
      <Action label="加自选" active>
        <circle cx="32" cy="31" r="26.500" />
        <path d="M32 18v26M19 31h26" />
      </Action>
    </footer>
  );
}

function SystemNav() {
  return (
    <div className="flex h-[126px] items-start pt-[37px] pl-[276px]">
      <svg width="48" height="46" viewBox="0 0 48 46" stroke="#888" strokeWidth="6" strokeLinecap="round">
        <path d="M4 11h40M4 26h40M4 41h40" />
      </svg>
      <svg width="60" height="46" viewBox="0 0 60 46" className="ml-[186px]" fill="none" stroke="#888" strokeWidth="5.500" strokeLinecap="round">
        <path d="M4 23L30 4l26 19" />
        <path d="M12 28v13a1 1 0 0 0 1 1h34a1 1 0 0 0 1-1V28" />
      </svg>
      <svg width="50" height="46" viewBox="0 0 50 46" className="ml-[186px]" fill="none" stroke="#888" strokeWidth="5.500" strokeLinecap="round">
        <path d="M4 10h41a1 1 0 0 1 1 1v30a1 1 0 0 1-1 1H12" />
        <path d="M1 10L13 1v9z" fill="#888" stroke="none" />
      </svg>
    </div>
  );
}

const DAYS = ["07/24", "07/25", "07/28", "07/29", "07/30"];

export default function App() {
  return (
    <div className="h-[2400px] w-[1080px] overflow-hidden bg-white font-['Noto_Sans_CJK_SC',sans-serif]">
      <StatusBar />
      <Header />
      <Quote />
      <Notice />
      <PeriodTabs />
      <Legend />
      <PriceChart />
      <VolumeHeader />
      <VolumeChart />
      <div className="mx-[12px] flex h-[59px] border-b-2 border-[#e4e4e4] pl-[9px] text-[40.500px] leading-[58px] tracking-[0.300px] text-[#999]">
        {DAYS.map((d) => (
          <span key={d} className="w-[211px] shrink-0 text-center">{d}</span>
        ))}
      </div>
      <Promo />
      <SectionTabs />
      <Cards />
      <BottomBar />
      <SystemNav />
    </div>
  );
}
